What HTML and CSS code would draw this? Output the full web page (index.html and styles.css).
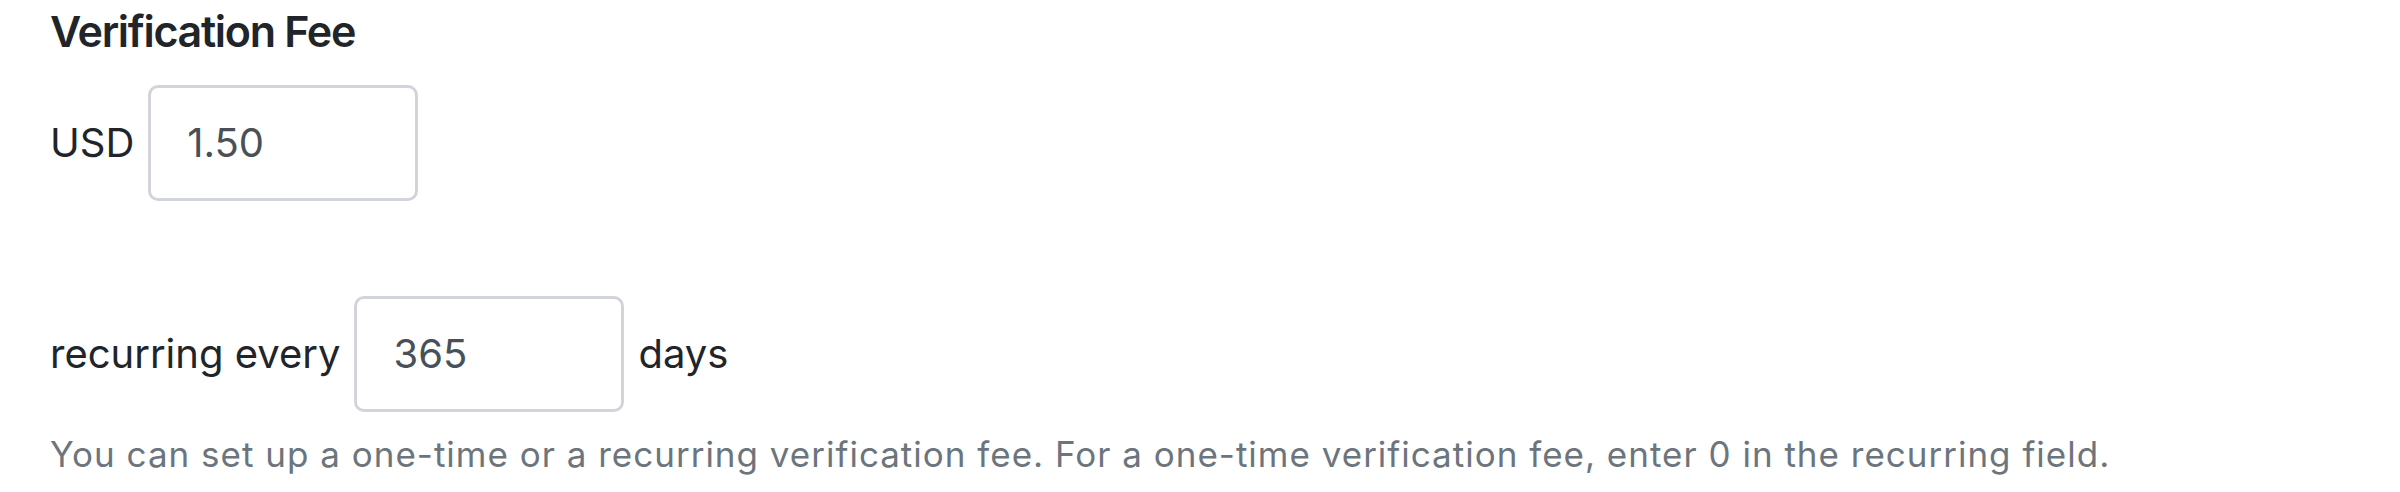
FILE: index.html
```html
<!DOCTYPE html>
<html lang="en">
<head>
<meta charset="utf-8">
<title>Verification Fee</title>
<link rel="stylesheet" href="styles.css">
</head>
<body>
<section class="fee">
  <h2 class="fee-title">Verification Fee</h2>
  <div class="fee-row">
    <label class="fee-label" for="amount">USD</label>
    <input class="fee-input" id="amount" type="text" value="1.50">
  </div>
  <div class="fee-row fee-row-recurring">
    <label class="fee-label" for="days">recurring every</label>
    <input class="fee-input" id="days" type="text" value="365">
    <span class="fee-label">days</span>
  </div>
  <p class="fee-help">You can set up a one-time or a recurring verification fee. For a one-time verification fee, enter 0 in the recurring field.</p>
</section>
</body>
</html>
```

FILE: styles.css
```css
html, body {
  margin: 0;
  padding: 0;
  background: #ffffff;
}

body {
  font-family: Inter, "Liberation Sans", sans-serif;
  color: #212529;
}

.fee {
  padding: 5px 0 0 50px;
}

.fee-title {
  margin: 0 0 27px 0;
  font-size: 43px;
  font-weight: 600;
  line-height: 1.23;
  letter-spacing: -1.3px;
  color: #212529;
}

.fee-row {
  display: flex;
  align-items: center;
  gap: 14px;
}

.fee-row-recurring {
  margin-top: 95px;
}

.fee-label {
  font-size: 40px;
  line-height: 1.5;
  color: #212529;
}

.fee-input {
  box-sizing: border-box;
  width: 270px;
  height: 116px;
  margin: 0;
  padding: 0 0 0 36px;
  border: 3px solid #d1d5db;
  border-radius: 10px;
  background: #ffffff;
  font-family: Inter, "Liberation Sans", sans-serif;
  font-size: 40px;
  color: #495057;
  outline: none;
}

.fee-help {
  margin: 16px 0 0 0;
  font-size: 35px;
  line-height: 1.5;
  letter-spacing: 1px;
  color: #6c757d;
}
```
